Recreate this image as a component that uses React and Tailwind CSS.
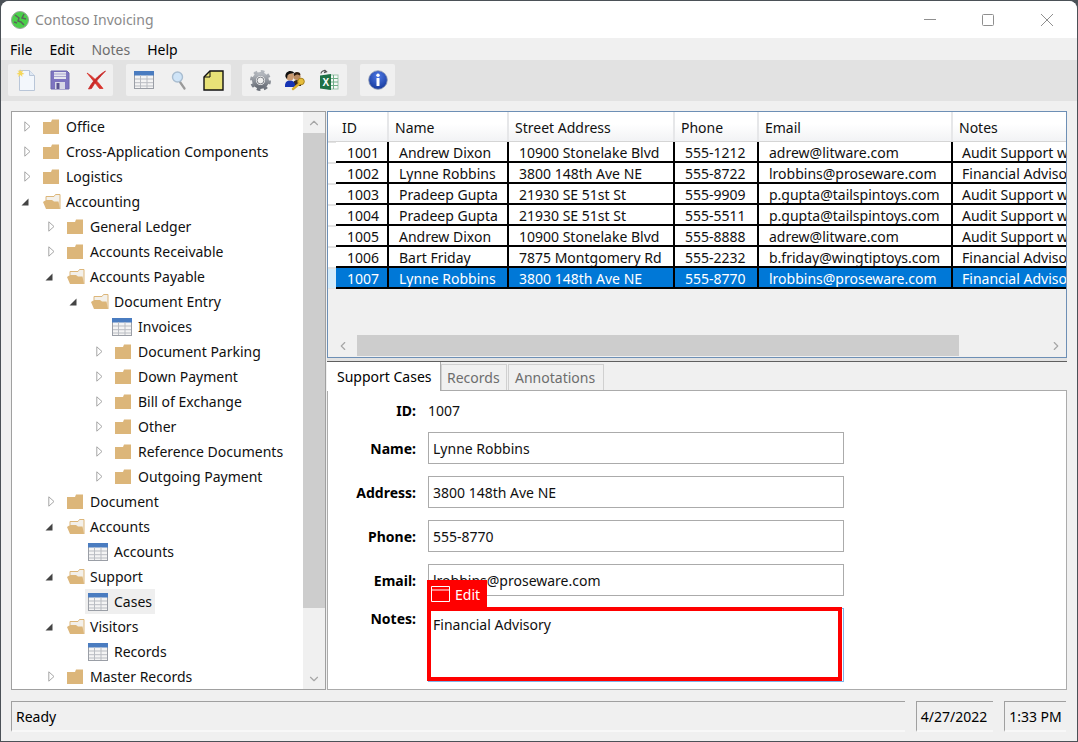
import React from 'react';
import { ChevronUp, ChevronDown, ChevronLeft, ChevronRight } from 'lucide-react';

const rows = [
  ['1001', 'Andrew Dixon', '10900 Stonelake Blvd', '555-1212', 'adrew@litware.com', 'Audit Support with Contoso'],
  ['1002', 'Lynne Robbins', '3800 148th Ave NE', '555-8722', 'lrobbins@proseware.com', 'Financial Advisory'],
  ['1003', 'Pradeep Gupta', '21930 SE 51st St', '555-9909', 'p.gupta@tailspintoys.com', 'Audit Support with Contoso'],
  ['1004', 'Pradeep Gupta', '21930 SE 51st St', '555-5511', 'p.gupta@tailspintoys.com', 'Audit Support with Contoso'],
  ['1005', 'Andrew Dixon', '10900 Stonelake Blvd', '555-8888', 'adrew@litware.com', 'Audit Support with Contoso'],
  ['1006', 'Bart Friday', '7875 Montgomery Rd', '555-2232', 'b.friday@wingtiptoys.com', 'Financial Advisory'],
  ['1007', 'Lynne Robbins', '3800 148th Ave NE', '555-8770', 'lrobbins@proseware.com', 'Financial Advisory'],
];

const columns = [
  { title: 'ID', cls: 'w-[53px]', cell: 'pl-[11px]' },
  { title: 'Name', cls: 'w-[120px]', cell: 'pl-[10px]' },
  { title: 'Street Address', cls: 'w-[166px]', cell: 'pl-[10px]' },
  { title: 'Phone', cls: 'w-[84px]', cell: 'pl-[10px]' },
  { title: 'Email', cls: 'w-[194px]', cell: 'pl-[10px]' },
  { title: 'Notes', cls: 'flex-1 min-w-0', cell: 'pl-[9px]' },
];

// level = indent step, kind = closed | open | table
const tree = [
  [0, 'closed', 'Office'],
  [0, 'closed', 'Cross-Application Components'],
  [0, 'closed', 'Logistics'],
  [0, 'open', 'Accounting'],
  [1, 'closed', 'General Ledger'],
  [1, 'closed', 'Accounts Receivable'],
  [1, 'open', 'Accounts Payable'],
  [2, 'open', 'Document Entry'],
  [3, 'table', 'Invoices'],
  [3, 'closed', 'Document Parking'],
  [3, 'closed', 'Down Payment'],
  [3, 'closed', 'Bill of Exchange'],
  [3, 'closed', 'Other'],
  [3, 'closed', 'Reference Documents'],
  [3, 'closed', 'Outgoing Payment'],
  [1, 'closed', 'Document'],
  [1, 'open', 'Accounts'],
  [2, 'table', 'Accounts'],
  [1, 'open', 'Support'],
  [2, 'table', 'Cases', true],
  [1, 'open', 'Visitors'],
  [2, 'table', 'Records'],
  [1, 'closed', 'Master Records'],
];

const indents = ['pl-[10px]', 'pl-[34px]', 'pl-[58px]', 'pl-[82px]'];

const TableIcon = ({ size = 20 }) => (
  <svg width={size} height={size} viewBox="0 0 20 20">
    <rect x="0.5" y="1.5" width="19" height="17" fill="#f4f4f4" stroke="#9a9ea6" />
    <rect x="0.5" y="1.5" width="19" height="3.5" fill="#4a7cc0" stroke="#4a7cc0" />
    <path d="M1 9h18M1 12.7h18M1 16h18M6.5 5v13M13 5v13" stroke="#b9bcc2" strokeWidth="1" />
  </svg>
);

const FolderClosed = () => (
  <svg width="17" height="16" viewBox="0 0 17 16">
    <path d="M0 3h8l1-2.5h7V15H0z" fill="#dcb67a" />
  </svg>
);

const FolderOpen = () => (
  <svg width="18" height="16" viewBox="0 0 18 16">
    <path d="M3 6V2.5h8l1.5-2H17V15" fill="#f3f0ea" stroke="#dcb67a" strokeWidth="1" />
    <path d="M0 8l3-2h6l2 1.5h4.5L17 15H3z" fill="#dcb67a" />
  </svg>
);

const Arrow = ({ open }) =>
  open ? (
    <svg className="mr-[5px] shrink-0" width="8" height="8" viewBox="0 0 8 8">
      <path d="M7.5 0.5V7.5H0.5z" fill="#444" />
    </svg>
  ) : (
    <svg className="shrink-0" width="7" height="11" viewBox="0 0 7 11">
      <path d="M0.8 0.8L6 5.5L0.8 10.2z" fill="#fff" stroke="#a6a6a6" />
    </svg>
  );

const TreeRow = ({ level, kind, label, selected }) => (
  <div className={`flex items-center h-[25px] ${indents[level]}`}>
    <span className="w-[10px] flex justify-center shrink-0">
      {kind !== 'table' && <Arrow open={kind === 'open'} />}
    </span>
    {kind === 'table' ? (
      <div className={`flex items-center h-[25px] ml-[5px] px-[3px] ${selected ? 'bg-[#efefef]' : ''}`}>
        <span className="w-[20px] flex"><TableIcon /></span>
        <span className="ml-[6px]">{label}</span>
      </div>
    ) : (
      <>
        <span className="ml-[11px] w-[18px] flex shrink-0">
          {kind === 'open' ? <FolderOpen /> : <FolderClosed />}
        </span>
        <span className="ml-[5px]">{label}</span>
      </>
    )}
  </div>
);

const ToolGroup = ({ cls, children }) => (
  <div className={`h-[32px] bg-[#f0f0f0] rounded-[2px] flex items-center ${cls}`}>{children}</div>
);

const NewIcon = () => (
  <svg width="20" height="24" viewBox="0 0 20 24">
    <path d="M3.5 2.5h10l5 5v15h-15z" fill="#f3f7fc" stroke="#b9c6d8" />
    <path d="M13.5 2.5v5h5" fill="#dfe8f3" stroke="#b9c6d8" />
    <path d="M4 1l1 2.5L7.5 2 6 4.5 8.500 6 6 6.500 6.500 9 4.500 7 2 9 3 6.500 0.500 6 3 4.500 1.500 2 3.500 3.500z" fill="#f5d75a" />
  </svg>
);

const SaveIcon = () => (
  <svg width="20" height="20" viewBox="0 0 20 20">
    <path d="M1 1h16l2 2v16H1z" fill="#7d74c0" stroke="#6f68ad" strokeWidth="1" />
    <rect x="4" y="2" width="12" height="7" fill="#e6e6ef" />
    <path d="M4 4h12M4 6.500h12" stroke="#a9a6cf" />
    <rect x="5" y="12" width="10" height="7" fill="#d8d8e6" />
    <rect x="6.500" y="13" width="3" height="6" fill="#5b5492" />
  </svg>
);

const DeleteIcon = () => (
  <svg width="20" height="20" viewBox="0 0 20 20">
    <path d="M1 3C7 6.500 12 12 17 18.500L13.500 18.500C9 13 6 9 1 3z" fill="#d8362f" stroke="#d8362f" strokeWidth="0.800" strokeLinejoin="round" />
    <path d="M19.500 1C12 5.500 6 12 2.500 19L5.500 18.500C9 12 14 7 19.500 1z" fill="#c92a28" stroke="#c92a28" strokeWidth="0.800" strokeLinejoin="round" />
  </svg>
);

const SearchIcon = () => (
  <svg width="16" height="20" viewBox="0 0 16 20">
    <path d="M9 12l4.500 6.500" stroke="#9a9a9a" strokeWidth="2.200" strokeLinecap="round" />
    <circle cx="6.500" cy="7" r="5" fill="#cfe4f7" stroke="#a9bdd0" strokeWidth="1.400" />
  </svg>
);

const NoteIcon = () => (
  <svg width="21" height="21" viewBox="0 0 21 21">
    <path d="M1 7L7 1h13v19H1z" fill="#e8e277" stroke="#111" strokeWidth="1.400" />
    <path d="M1 7h6V1" fill="none" stroke="#111" strokeWidth="1" />
  </svg>
);

const GearIcon = () => (
  <svg width="21" height="21" viewBox="0 0 21 21">
    <defs>
      <linearGradient id="gearFill" x1="0" y1="0" x2="0" y2="1">
        <stop offset="0" stopColor="#b4b8be" />
        <stop offset="1" stopColor="#6a6f78" />
      </linearGradient>
    </defs>
    <circle cx="10.500" cy="10.500" r="6.500" fill="none" stroke="url(#gearFill)" strokeWidth="4" />
    <circle cx="10.500" cy="10.500" r="9" fill="none" stroke="url(#gearFill)" strokeWidth="3" strokeDasharray="3.600 3.470" />
    <circle cx="10.500" cy="10.500" r="3.400" fill="#f0f0f0" stroke="#62666d" strokeWidth="0.800" />
  </svg>
);

const UsersKeyIcon = () => (
  <svg width="22" height="22" viewBox="0 0 22 22">
    <path d="M9 15c0-3 2-4 4-4s4 1.500 4 4v2H9z" fill="#3a2a1c" />
    <circle cx="13" cy="7.500" r="3.600" fill="#b98a60" />
    <path d="M9.500 6c0-3.500 6-4 7-.5l-1 1c-2-1.500-3-1-5 .5z" fill="#2e1d10" />
    <path d="M1 17c0-4 2-5.500 5-5.500s5 1.500 5 5.500v1H1z" fill="#1634b4" />
    <circle cx="6" cy="7.500" r="3.900" fill="#c99a72" />
    <path d="M1.500 8C0.500 2 8 0 10.500 4.500 8 4 5 4.500 3.500 6.500L3 10z" fill="#0e0e0e" />
    <circle cx="17" cy="12.500" r="3.300" fill="#e6bd3c" stroke="#a8821c" />
    <path d="M15 15l-6 5" stroke="#d9ae30" strokeWidth="2.400" strokeLinecap="round" />
  </svg>
);

const ExcelIcon = () => (
  <svg width="20" height="22" viewBox="0 0 20 22">
    <rect x="9" y="6" width="10" height="14" fill="#f4f8f5" stroke="#9cc4ac" />
    <path d="M11 9.500h8M11 13h8M11 16.500h8M14.500 6v14" stroke="#6fae87" />
    <path d="M1 6.500L12 5v16L1 19.500z" fill="#1e7145" />
    <text x="3.500" y="16.500" fontSize="10" fontWeight="700" fill="#fff" fontFamily="Liberation Sans, sans-serif">X</text>
    <path d="M2 4.500A3 3 0 0 1 7 2.500M5.500 1L7.500 2.800 5 3.600" fill="none" stroke="#555" strokeWidth="1.200" />
  </svg>
);

const InfoIcon = () => (
  <svg width="20" height="20" viewBox="0 0 20 20">
    <defs>
      <radialGradient id="infoFill" cx="0.500" cy="0.300" r="0.700">
        <stop offset="0" stopColor="#4f79e6" />
        <stop offset="1" stopColor="#163a9c" />
      </radialGradient>
    </defs>
    <circle cx="10" cy="10" r="9.300" fill="url(#infoFill)" stroke="#8e99b4" strokeWidth="0.800" />
    <circle cx="10" cy="5.200" r="1.700" fill="#fff" />
    <rect x="8.500" y="8" width="3" height="8" rx="0.500" fill="#fff" />
  </svg>
);

const AppIcon = () => (
  <svg width="18" height="18" viewBox="0 0 18 18">
    <circle cx="9" cy="9" r="8.500" fill="#49d049" stroke="#9aa59a" />
    <path d="M4 4l4 3-1 3 3 1 3 3M13 3l-2 4 4 1M3 11l3 1" fill="none" stroke="#5a665a" strokeWidth="1.500" />
  </svg>
);

const MenuItem = ({ label, muted, cls }) => (
  <span className={`${muted ? 'text-[#6d6d6d]' : 'text-black'} ${cls}`}>{label}</span>
);

const FormRow = ({ label, value, cls }) => (
  <div className={`flex items-center ${cls}`}>
    <span className="w-[88px] text-right font-bold text-black pt-[2px]">{label}</span>
    <div className="ml-[12px] w-[416px] h-[32px] border border-[#ababab] bg-white flex items-center pl-[4px] pt-[2px]">{value}</div>
  </div>
);

const App = () => (
  <div
    className="w-[1078px] h-[742px] bg-[#4b5157] overflow-hidden pt-px px-px pb-px text-[14px] leading-none text-[#101010]"
    style={{ fontFamily: '"Noto Sans", sans-serif' }}
  >
    <div className="h-full bg-[#f0f0f0] rounded-t-[8px] flex flex-col overflow-hidden">
      {/* title bar */}
      <div className="h-[37px] bg-white flex items-center shrink-0">
        <span className="ml-[10px] flex"><AppIcon /></span>
        <span className="ml-[6px] text-[#8a8a8a]">Contoso Invoicing</span>
        <div className="ml-auto flex items-center">
          <span className="w-[12px] h-px bg-[#8f8f8f]" />
          <span className="ml-[46px] w-[12px] h-[12px] border border-[#8f8f8f] rounded-[1.500px]" />
          <svg className="ml-[46px] mr-[23px]" width="14" height="14" viewBox="0 0 14 14">
            <path d="M1 1l12 12M13 1L1 13" stroke="#8f8f8f" strokeWidth="1" />
          </svg>
        </div>
      </div>

      {/* menu */}
      <div className="h-[22px] flex items-center shrink-0 pl-[9px] pt-[2px]">
        <MenuItem label="File" />
        <MenuItem label="Edit" cls="ml-[17px]" />
        <MenuItem label="Notes" muted cls="ml-[17px]" />
        <MenuItem label="Help" cls="ml-[17px]" />
      </div>

      {/* toolbar */}
      <div className="h-[41px] bg-[#e2e2e2] flex items-start shrink-0 pl-[7px] pt-[4px]">
        <ToolGroup cls="w-[105px]">
          <span className="ml-[8px] flex"><NewIcon /></span>
          <span className="ml-[14px] flex"><SaveIcon /></span>
          <span className="ml-[16px] flex"><DeleteIcon /></span>
        </ToolGroup>
        <ToolGroup cls="w-[105px] ml-[13px]">
          <span className="ml-[8px] flex"><TableIcon /></span>
          <span className="ml-[17px] flex"><SearchIcon /></span>
          <span className="ml-[16px] flex"><NoteIcon /></span>
        </ToolGroup>
        <ToolGroup cls="w-[105px] ml-[11px]">
          <span className="ml-[8px] flex"><GearIcon /></span>
          <span className="ml-[13px] flex"><UsersKeyIcon /></span>
          <span className="ml-[13px] flex"><ExcelIcon /></span>
        </ToolGroup>
        <ToolGroup cls="w-[35px] ml-[13px]">
          <span className="ml-[8px] flex"><InfoIcon /></span>
        </ToolGroup>
      </div>

      {/* main area */}
      <div className="flex mt-[10px] ml-[10px] mr-[10px] h-[579px] shrink-0">
        {/* tree */}
        <div className="w-[315px] border border-[#a0a0a0] bg-white flex shrink-0 overflow-hidden">
          <div className="flex-1 min-w-0 pt-[2px] overflow-hidden">
            {tree.map(([level, kind, label, selected], i) => (
              <TreeRow key={i} level={level} kind={kind} label={label} selected={selected} />
            ))}
          </div>
          <div className="w-[22px] bg-[#f0f0f0] flex flex-col shrink-0">
            <div className="h-[21px] flex items-center justify-center text-[#a6a6a6]"><ChevronUp size={14} /></div>
            <div className="h-[475px] bg-[#cdcdcd]" />
            <div className="flex-1 flex items-end justify-center pb-[3px] text-[#a6a6a6]"><ChevronDown size={14} /></div>
          </div>
        </div>

        <div className="ml-[1px] flex-1 min-w-0 flex flex-col">
          {/* grid */}
          <div className="h-[247px] border border-[#6d8fb5] bg-[#f0f0f0] flex flex-col shrink-0 overflow-hidden">
            <div className="h-[30px] flex shrink-0 pl-[8px] bg-gradient-to-b from-white from-40% to-[#f2f3f5] border-b border-[#d5d5d5]">
              {columns.map((col) => (
                <div key={col.title} className={`${col.cls} flex items-center pl-[6px] pt-[3px] border-r-2 border-[#e6e7e9] last:border-r-0 text-[#111]`}>
                  {col.title}
                </div>
              ))}
            </div>
            {rows.map((row) => {
              const active = row[0] === '1007';
              return (
                <div key={row[0]} className="h-[21px] flex shrink-0">
                  <div className={`w-[8px] shrink-0 border-y border-[#e3e3e3] ${active ? 'bg-[#d4ecfb]' : 'bg-white'}`} />
                  <div className={`flex flex-1 min-w-0 border-b-2 border-black ${active ? 'bg-[#0078d7] text-white' : 'bg-white'}`}>
                    {row.map((value, i) => (
                      <div
                        key={i}
                        className={`${columns[i].cls} ${columns[i].cell} flex items-center pt-[3px] whitespace-nowrap overflow-hidden ${i < 5 ? 'border-r-2 border-black' : ''}`}
                      >
                        {value}
                      </div>
                    ))}
                  </div>
                </div>
              );
            })}
            {/* horizontal scroll */}
            <div className="mt-auto h-[21px] flex items-center shrink-0 mb-px">
              <div className="w-[29px] flex justify-center text-[#a6a6a6]"><ChevronLeft size={14} /></div>
              <div className="w-[602px] h-full bg-[#cdcdcd]" />
              <div className="flex-1 flex justify-end pr-[3px] text-[#a6a6a6]"><ChevronRight size={14} /></div>
            </div>
          </div>

          {/* splitter */}
          <div className="h-[4px] bg-[#e2e2e2] border-b border-[#5f5f5f] shrink-0" />

          {/* tabs */}
          <div className="h-[28px] flex items-end shrink-0 relative z-10">
            <div className="w-[114px] h-[29px] -mb-px bg-white border-r border-[#ababab] flex items-center pl-[10px] text-black">Support Cases</div>
            <div className="w-[66px] h-[26px] border border-[#d0d0d0] border-b-0 bg-[#f0f0f0] flex items-center pl-[5px] text-[#6d6d6d]">Records</div>
            <div className="w-[96px] h-[26px] ml-px border border-[#d0d0d0] border-b-0 bg-[#f0f0f0] flex items-center pl-[6px] text-[#6d6d6d]">Annotations</div>
          </div>

          {/* form */}
          <div className="flex-1 min-h-0 bg-white border border-[#ababab] pt-[41px] relative">
            <div className="absolute left-0 top-[10px] h-[20px] flex items-center">
              <span className="w-[88px] text-right font-bold text-black">ID:</span>
              <span className="ml-[12px]">1007</span>
            </div>
            <FormRow label="Name:" value="Lynne Robbins" />
            <FormRow label="Address:" value="3800 148th Ave NE" cls="mt-[12px]" />
            <FormRow label="Phone:" value="555-8770" cls="mt-[12px]" />
            <FormRow label="Email:" value="lrobbins@proseware.com" cls="mt-[12px]" />
            <div className="flex mt-[12px]">
              <span className="w-[88px] text-right font-bold text-black pt-[4px]">Notes:</span>
              <div className="ml-[12px] w-[416px] h-[74px] border border-[#7eb4ea] pl-[4px] pt-[9px] bg-white">Financial Advisory</div>
            </div>
            {/* selection adorner */}
            <div className="absolute left-[99px] top-[189px] w-[60px] h-[28px] bg-[#ff0000] text-white flex items-center pl-[4px] pt-[2px]">
              <svg className="-mt-[2px]" width="20" height="16" viewBox="0 0 20 16">
                <path d="M0.500 0.500h18v15h-18zM0.500 4h18" fill="none" stroke="#fff" strokeWidth="1" />
              </svg>
              <span className="ml-[4px]">Edit</span>
            </div>
            <div className="absolute left-[99px] top-[216px] w-[415px] h-[74px] border-[4px] border-[#ff0000]" />
          </div>
        </div>
      </div>

      {/* status bar */}
      <div className="flex mt-[11px] ml-[10px] h-[31px] shrink-0 text-black">
        <div className="w-[894px] bg-[#f0f0f0] border-t border-l border-[#a0a0a0] border-b-2 border-b-[#f8f8f8] flex items-center pl-[4px] pt-[2px]">Ready</div>
        <div className="w-[77px] ml-[11px] border-t border-l border-[#a0a0a0] border-b-2 border-b-[#f8f8f8] flex items-center justify-center pt-[2px] pr-[2px]">4/27/2022</div>
        <div className="w-[62px] ml-[11px] border-t border-l border-[#a0a0a0] border-b-2 border-b-[#f8f8f8] flex items-center justify-center pt-[2px]">1:33 PM</div>
      </div>
    </div>
  </div>
);

export default App;
